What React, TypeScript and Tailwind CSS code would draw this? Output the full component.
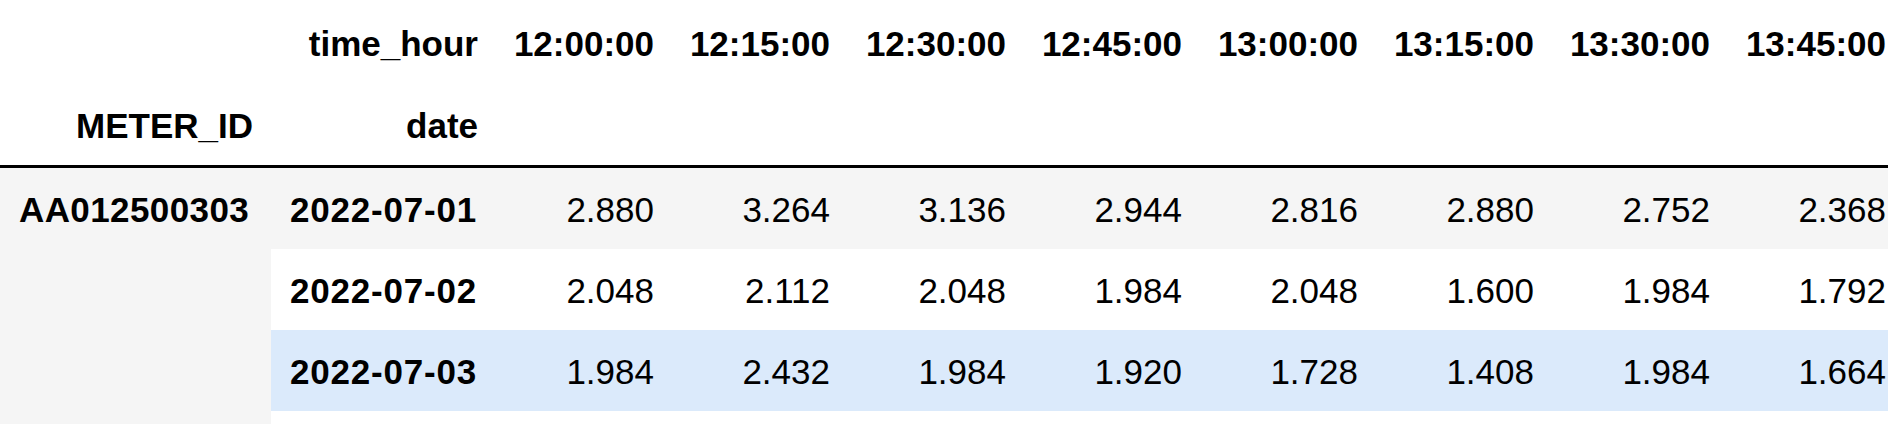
import React from "react";

const times = ["12:00:00", "12:15:00", "12:30:00", "12:45:00", "13:00:00", "13:15:00", "13:30:00", "13:45:00"];

const rows: { date: string; values: string[]; bg: string }[] = [
  { date: "2022-07-01", values: ["2.880", "3.264", "3.136", "2.944", "2.816", "2.880", "2.752", "2.368"], bg: "bg-[#f5f5f5]" },
  { date: "2022-07-02", values: ["2.048", "2.112", "2.048", "1.984", "2.048", "1.600", "1.984", "1.792"], bg: "bg-white" },
  { date: "2022-07-03", values: ["1.984", "2.432", "1.984", "1.920", "1.728", "1.408", "1.984", "1.664"], bg: "bg-[#dbeafb]" },
];

export default function App() {
  return (
    <div className="w-[1888px] h-[424px] overflow-hidden bg-white text-black font-['Liberation_Sans',Arial,sans-serif] text-[35px] leading-[40px]">
      <table className="table-fixed border-separate border-spacing-0 w-[1904px]">
        <colgroup>
          <col className="w-[271px]" />
          <col className="w-[225px]" />
          {times.map((t) => (
            <col key={t} className="w-[176px]" />
          ))}
        </colgroup>
        <thead>
          <tr className="h-[82px]">
            <th className="p-0"></th>
            <th className="pr-[18px] text-right font-bold align-middle pt-[6px]">time_hour</th>
            {times.map((t) => (
              <th key={t} className="pr-[18px] text-right font-bold align-middle pt-[6px]">
                {t}
              </th>
            ))}
          </tr>
          <tr className="h-[86px]">
            <th className="pr-[18px] pt-[5px] text-right font-bold align-middle border-b-[3px] border-black">METER_ID</th>
            <th className="pr-[18px] pt-[5px] text-right font-bold align-middle border-b-[3px] border-black">date</th>
            {times.map((t) => (
              <th key={t} className="border-b-[3px] border-black"></th>
            ))}
          </tr>
        </thead>
        <tbody>
          {rows.map((r, i) => (
            <tr key={r.date} className={`h-[81px] ${r.bg}`}>
              {i === 0 && (
                <th rowSpan={4} className="pl-[19px] pt-[22px] text-left align-top font-bold bg-[#f5f5f5] tracking-[0.4px]">
                  AA012500303
                </th>
              )}
              <th className="pl-[19px] pt-[2px] text-left font-bold align-middle tracking-[0.8px]">{r.date}</th>
              {r.values.map((v, j) => (
                <td key={j} className="pr-[18px] pt-[2px] text-right align-middle font-normal">
                  {v}
                </td>
              ))}
            </tr>
          ))}
          <tr className="h-[81px] bg-white">
            <td className="p-0"></td>
            {times.map((t) => (
              <td key={t} className="p-0"></td>
            ))}
          </tr>
        </tbody>
      </table>
    </div>
  );
}
